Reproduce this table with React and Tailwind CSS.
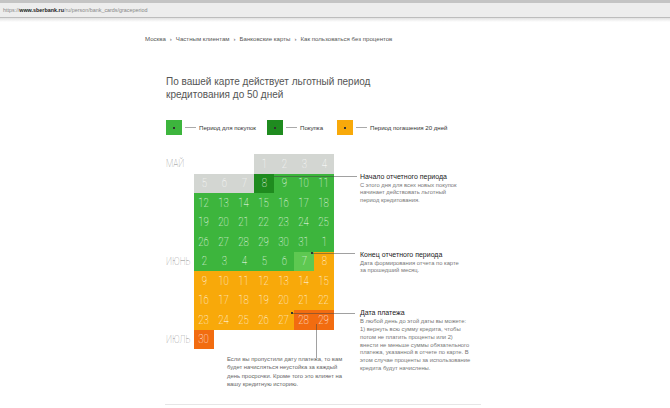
import React from 'react';

// цвета ячеек календаря
const S = 'bg-[#d3d6d2]';
const G = 'bg-[#3db53d]';
const D = 'bg-[#1f8b1f]';
const L = 'bg-[#5ec851]';
const O = 'bg-[#f8a90a]';
const R = 'bg-[#f26c10]';

const rows = [
  [null, null, null, [S, 1], [S, 2], [S, 3], [S, 4]],
  [[S, 5], [S, 6], [S, 7], [D, 8], [G, 9], [G, 10], [G, 11]],
  [[G, 12], [G, 13], [G, 14], [G, 15], [G, 16], [G, 17], [G, 18]],
  [[G, 19], [G, 20], [G, 21], [G, 22], [G, 23], [G, 24], [G, 25]],
  [[G, 26], [G, 27], [G, 28], [G, 29], [G, 30], [G, 31], [G, 1]],
  [[G, 2], [G, 3], [G, 4], [G, 5], [G, 6], [L, 7], [O, 8]],
  [[O, 9], [O, 10], [O, 11], [O, 12], [O, 13], [O, 14], [O, 15]],
  [[O, 16], [O, 17], [O, 18], [O, 19], [O, 20], [O, 21], [O, 22]],
  [[O, 23], [O, 24], [O, 25], [O, 26], [O, 27], [R, 28], [R, 29]],
  [[R, 30], null, null, null, null, null, null],
];

const months = { 0: 'МАЙ', 5: 'ИЮНЬ', 9: 'ИЮЛЬ' };

const Legend = ({ color, label, gap }) => (
  <div className={`flex items-center ${gap}`}>
    <div className={`w-[16px] h-[15px] ${color} flex items-center justify-center`}>
      <span className="w-[2px] h-[2px] bg-[#333]"></span>
    </div>
    <span className="ml-[3px] w-[11px] h-px bg-[#aaa]"></span>
    <span className="ml-[3px] text-[6.1px] text-[#333]">{label}</span>
  </div>
);

const Note = ({ title, lines, row }) => (
  <div className={`${row} col-start-1 -mt-[2px]`}>
    <p className="text-[7px] leading-[9px] text-[#222]">{title}</p>
    <div className="mt-[1px] text-[5.8px] leading-[7.8px] text-[#777]">
      {lines.map((l, i) => <p key={i}>{l}</p>)}
    </div>
  </div>
);

export default function App() {
  return (
    <div className="w-[670px] h-[408px] bg-white overflow-hidden [font-family:'Liberation_Sans',Arial,sans-serif]">
      {/* адресная строка */}
      <div className="h-[3px] bg-[#c4c4c4]"></div>
      <div className="h-[15px] bg-[#ededed] border-b border-[#bdbdbd] flex items-center pl-[3px] text-[5.4px] text-[#888]">
        <span>https://</span>
        <span className="font-bold text-[#222]">www.sberbank.ru</span>
        <span>/ru/person/bank_cards/graceperiod</span>
      </div>
      <div className="h-[4px] bg-gradient-to-b from-[#e2e2e2] to-white"></div>

      <div className="ml-[145px] mt-[12px] text-[6.1px] text-[#555] flex gap-[4px]">
        <span>Москва</span><span>›</span>
        <span>Частным клиентам</span><span>›</span>
        <span>Банковские карты</span><span>›</span>
        <span>Как пользоваться без процентов</span>
      </div>

      <h1 className="ml-[166px] mt-[32px] text-[10px] leading-[13px] text-[#555]">
        По вашей карте действует льготный период<br />кредитования до 50 дней
      </h1>

      <div className="ml-[166px] mt-[19px] flex">
        <Legend color="bg-[#3db53d]" label="Период для покупок" gap="w-[101px]" />
        <Legend color="bg-[#1f8b1f]" label="Покупка" gap="w-[70px]" />
        <Legend color="bg-[#f8a90a]" label="Период погашения 20 дней" gap="" />
      </div>

      {/* календарь */}
      <div className="relative ml-[166px] mt-[19px] flex">
        <div className="w-[28px] flex flex-col">
          {rows.map((_, i) => (
            <div key={i} className="h-[19.5px] flex items-center text-[10.5px] text-[#8a8a8a] font-thin [font-family:Roboto,sans-serif]">
              <span className="inline-block origin-left scale-x-[0.8]">{months[i] || ''}</span>
            </div>
          ))}
        </div>

        <div className="grid grid-cols-[repeat(7,20px)] auto-rows-[19.5px]">
          {rows.flat().map((c, i) =>
            c ? (
              <div key={i} className={`${c[0]} flex items-center justify-center text-white text-[12px] font-thin [font-family:Roboto,sans-serif]`}>
                <span className="inline-block scale-x-[0.8]">{c[1]}</span>
              </div>
            ) : (
              <div key={i}></div>
            )
          )}
        </div>

        <div className="ml-[26px] w-[160px] grid grid-rows-[repeat(10,19.5px)]">
          <Note
            row="row-start-2"
            title="Начало отчетного периода"
            lines={['С этого дня для всех новых покупок', 'начинает действовать льготный', 'период кредитования.']}
          />
          <Note
            row="row-start-6"
            title="Конец отчетного периода"
            lines={['Дата формирования отчета по карте', 'за прошедший месяц.']}
          />
          <Note
            row="row-start-9"
            title="Дата платежа"
            lines={[
              'В любой день до этой даты вы можете:',
              '1) вернуть всю сумму кредита, чтобы',
              'потом не платить проценты или 2)',
              'внести не меньше суммы обязательного',
              'платежа, указанной в отчете по карте. В',
              'этом случае проценты за использование',
              'кредита будут начислены.',
            ]}
          />
        </div>

        {/* выноски */}
        <span className="absolute left-[108px] top-[22px] w-[83px] h-px bg-[#444]/50"></span>
        <span className="absolute left-[146px] top-[99px] w-[43px] h-px bg-[#444]/50"></span>
        <span className="absolute left-[145px] top-[98px] w-[2px] h-[2px] bg-[#333]"></span>
        <span className="absolute left-[126px] top-[159px] w-[63px] h-px bg-[#444]/50"></span>
        <span className="absolute left-[125px] top-[158px] w-[2px] h-[2px] bg-[#333]"></span>
        <span className="absolute left-[150px] top-[170px] w-px h-[34px] bg-[#444]/50"></span>
      </div>

      <div className="ml-[227px] mt-[6px] text-[5.9px] leading-[8.3px] text-[#666]">
        <p>Если вы пропустили дату платежа, то вам</p>
        <p>будет начисляться неустойка за каждый</p>
        <p>день просрочки. Кроме того это влияет на</p>
        <p>вашу кредитную историю.</p>
      </div>

      <div className="ml-[165px] mt-[16px] w-[316px] border-t border-[#e6e6e6]"></div>
    </div>
  );
}
